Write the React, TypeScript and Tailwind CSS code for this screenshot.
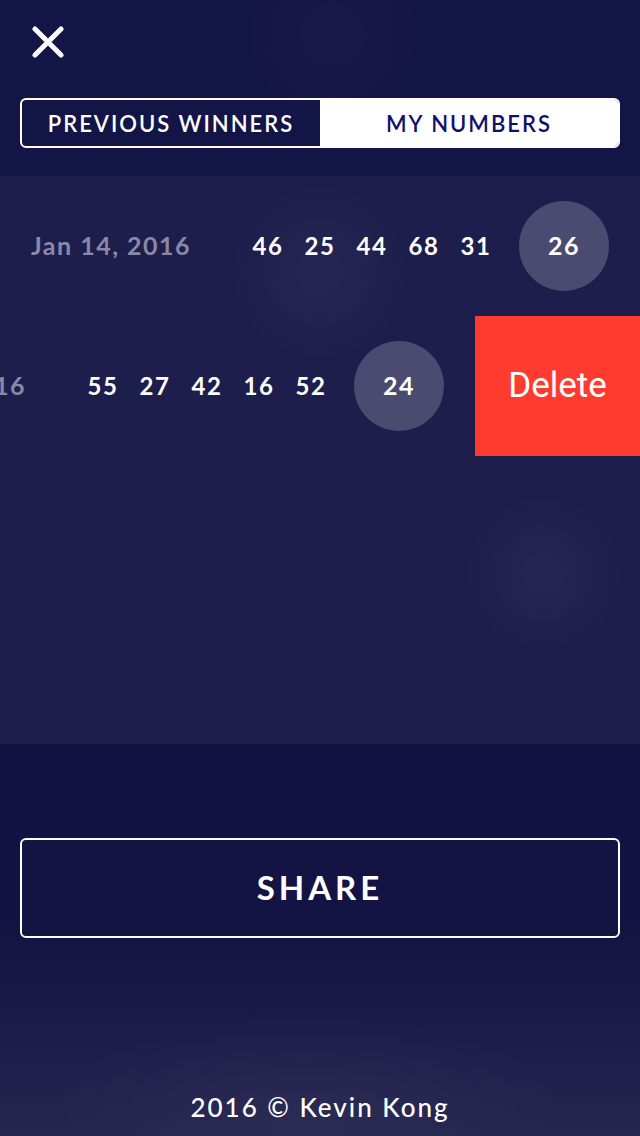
import React from 'react';

// Lottery "my numbers" screen with a swiped-open delete row

interface Draw {
  date: string;
  balls: number[];
  power: number;
}

const draws: Draw[] = [
  { date: 'Jan 14, 2016', balls: [46, 25, 44, 68, 31], power: 26 },
  { date: 'Jan 13, 2016', balls: [55, 27, 42, 16, 52], power: 24 },
];

function CloseIcon() {
  return (
    <svg width="32" height="32" viewBox="0 0 32 32" fill="none">
      <path d="M3 3L29 29M29 3L3 29" stroke="white" strokeWidth="5" strokeLinecap="round" />
    </svg>
  );
}

function DrawRow({ draw }: { draw: Draw }) {
  return (
    <div className="w-[640px] h-[140px] shrink-0 flex items-center px-[31px]">
      <div className="flex-1 text-[25px] font-bold tracking-[1.5px] text-[#8a88a8] whitespace-nowrap">
        {draw.date}
      </div>
      <div className="flex">
        {draw.balls.map((n, i) => (
          <div
            key={i}
            className="w-[52px] text-center text-[24px] font-bold tracking-[1.5px] text-white"
          >
            {n}
          </div>
        ))}
      </div>
      <div className="ml-[17px] w-[90px] h-[90px] rounded-full bg-[#4b4a71] flex items-center justify-center text-[25px] font-bold tracking-[1.5px] text-white">
        {draw.power}
      </div>
    </div>
  );
}

export default function App() {
  return (
    <div className="w-[640px] h-[1136px] overflow-hidden flex flex-col bg-[#141547] text-white font-['Lato',sans-serif]">
      {/* header */}
      <div className="h-[176px] shrink-0 px-[20px] pt-[26px] flex flex-col bg-[radial-gradient(circle_at_52%_20%,rgba(255,255,255,0.025),transparent_90px)]">
        <button className="ml-[12px] w-[32px] h-[32px]">
          <CloseIcon />
        </button>
        <div className="mt-[40px] h-[50px] flex rounded-[6px] border-2 border-white overflow-hidden">
          <div className="flex-1 flex items-center justify-center text-[22px] tracking-[2px] font-semibold text-white">
            PREVIOUS WINNERS
          </div>
          <div className="flex-1 flex items-center justify-center bg-white text-[22px] tracking-[2px] font-semibold text-[#10106b]">
            MY NUMBERS
          </div>
        </div>
      </div>

      {/* list */}
      <div className="h-[568px] shrink-0 flex flex-col bg-[#1e1e4c] bg-[radial-gradient(circle_at_50%_17%,rgba(255,255,255,0.04),transparent_90px),radial-gradient(circle_at_85%_70%,rgba(255,255,255,0.04),transparent_80px)]">
        <DrawRow draw={draws[0]} />
        <div className="h-[140px] overflow-hidden">
          <div className="flex w-[805px] -ml-[165px]">
            <DrawRow draw={draws[1]} />
            <button className="w-[165px] h-[140px] shrink-0 bg-[#ff3b30] flex items-center justify-center text-[35px] font-normal text-white font-['Roboto',sans-serif]">
              Delete
            </button>
          </div>
        </div>
      </div>

      {/* bottom */}
      <div className="flex-1 flex flex-col px-[20px] pt-[94px] bg-[radial-gradient(ellipse_260px_90px_at_48%_92%,rgba(255,255,255,0.035),transparent),linear-gradient(to_bottom,#131343_0%,#131343_45%,#25254f_100%)]">
        <button className="h-[100px] shrink-0 rounded-[6px] border-2 border-white bg-[#131344] flex items-center justify-center text-[33px] font-bold tracking-[4px] text-white">
          SHARE
        </button>
        <div className="flex-1 flex items-end justify-center pb-[14px]">
          <p className="text-[26px] tracking-[2px] font-medium text-white leading-[30px]">2016 © Kevin Kong</p>
        </div>
      </div>
    </div>
  );
}
